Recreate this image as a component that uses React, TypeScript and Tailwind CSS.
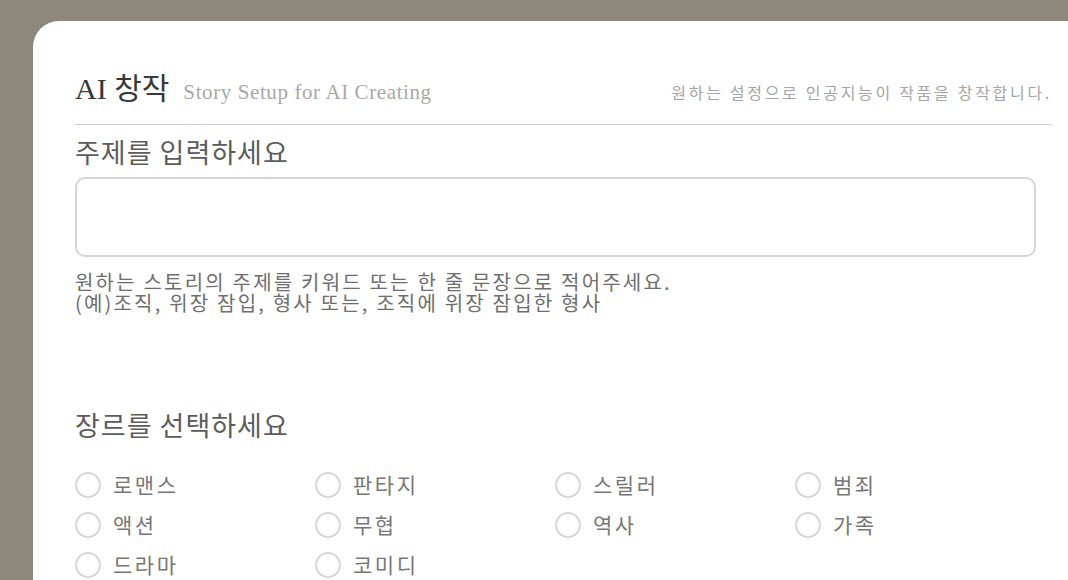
import React from 'react';

const genres = ['로맨스', '판타지', '스릴러', '범죄', '액션', '무협', '역사', '가족', '드라마', '코미디'];

const sans = "font-['Noto_Sans_CJK_KR','Noto_Sans',sans-serif]";

export default function App() {
  return (
    <div className="w-full h-[580px] overflow-hidden bg-[#8e877b] pt-[21px] pl-[33px]">
      <div className={`h-full bg-white rounded-tl-[26px] pl-[42px] pr-[16px] ${sans}`}>
        {/* Header */}
        <div className="h-[104px] flex items-end justify-between pb-[20px] border-b border-[#cfcfcf]">
          <div className="flex items-baseline gap-[14px] font-['Liberation_Serif','Noto_Sans_CJK_KR',serif]">
            <span className="text-[30px] leading-none text-[#383838]">AI 창작</span>
            <span className="text-[21px] leading-none tracking-[0.6px] text-[#a8a8a8]">Story Setup for AI Creating</span>
          </div>
          <span className="text-[16px] leading-none tracking-[2.7px] text-[#a5a5a5] pb-[4px]">
            원하는 설정으로 인공지능이 작품을 창작합니다.
          </span>
        </div>

        {/* Topic */}
        <h2 className="mt-[13px] text-[27px] leading-[28px] tracking-[1px] text-[#5c5c5c]">주제를 입력하세요</h2>
        <div className="mt-[11px] w-[961px] h-[80px] rounded-[10px] border-2 border-[#d6d6d6]" />
        <div className="mt-[14px] text-[20px] leading-[21px] tracking-[2.2px] text-[#6e6e6e]">
          <p>원하는 스토리의 주제를 키워드 또는 한 줄 문장으로 적어주세요.</p>
          <p>(예)조직, 위장 잠입, 형사 또는, 조직에 위장 잠입한 형사</p>
        </div>

        {/* Genre */}
        <h2 className="mt-[98px] text-[27px] leading-[28px] tracking-[1px] text-[#5c5c5c]">장르를 선택하세요</h2>
        <div className="mt-[26px] grid grid-cols-[240px_240px_240px_240px]">
          {genres.map((g) => (
            <label key={g} className="h-[40px] flex items-center gap-[12px] cursor-pointer">
              <span className="w-[26px] h-[26px] rounded-full border-2 border-[#d6d6d6] shrink-0" />
              <span className="text-[21px] tracking-[2.5px] text-[#777]">{g}</span>
            </label>
          ))}
        </div>
      </div>
    </div>
  );
}
